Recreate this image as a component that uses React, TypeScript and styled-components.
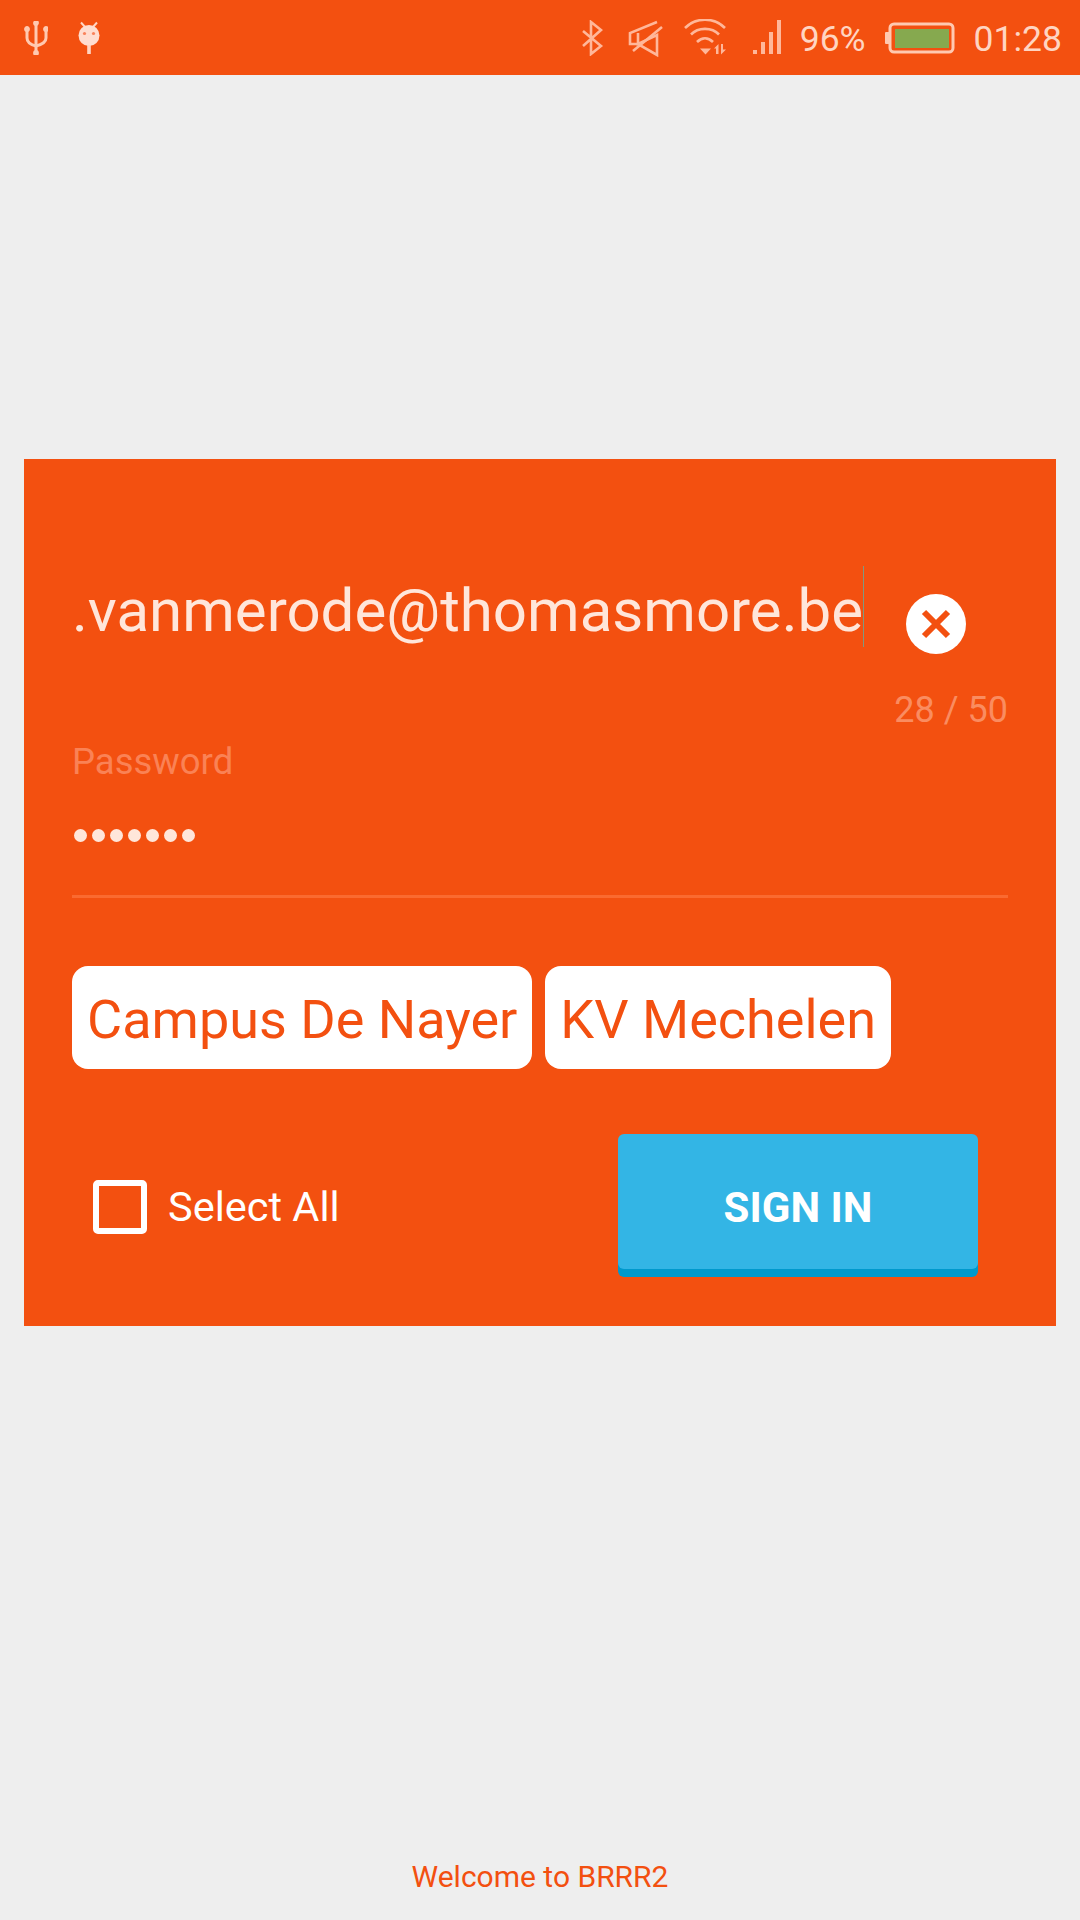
import React, {FC, ReactElement} from 'react';
import styled, {createGlobalStyle} from 'styled-components';

const ORANGE = '#F35010';

const GlobalStyle = createGlobalStyle`
html, body {
  margin: 0;
  padding: 0;
  background: #EEEEEE;
}
* {
  box-sizing: border-box;
}
`

const Page = styled.div`
width: 1080px;
height: 1920px;
display: flex;
flex-direction: column;
background: #EEEEEE;
font-family: Roboto, 'Liberation Sans', sans-serif;
overflow: hidden;`

const StatusBar = styled.div`
height: 75px;
flex: none;
background: ${ORANGE};
display: flex;
align-items: center;
justify-content: space-between;
padding: 0 18px 0 24px;`

const StatusGroup = styled.div`
display: flex;
align-items: center;`

const StatusItem = styled.div<{$left: number}>`
display: flex;
align-items: center;
margin-left: ${props => props.$left}px;`

const StatusText = styled.span<{$size: number}>`
font-size: ${props => props.$size}px;
color: #FFD5C2;
line-height: 75px;
padding-top: 4px;`

const Main = styled.div`
flex: 1;
padding: 384px 24px 0;`

const Card = styled.div`
height: 867px;
background: ${ORANGE};
padding: 107px 48px 0;`

const EmailRow = styled.div`
display: flex;
align-items: flex-start;
height: 92px;`

const EmailText = styled.div`
width: 792px;
height: 81px;
font-size: 60px;
line-height: 89px;
color: #FFE6DA;
white-space: nowrap;
text-align: right;
border-right: 1px solid #7F9A80;`

const ClearButton = styled.div`
width: 60px;
height: 60px;
margin: 28px 0 0 42px;
border-radius: 50%;
background: #FFFFFF;
display: flex;
align-items: center;
justify-content: center;`

const Counter = styled.div`
margin-top: 32px;
text-align: right;
font-size: 36px;
line-height: 40px;
color: #FA8C60;`

const PasswordLabel = styled.div`
margin-top: 12px;
font-size: 36.5px;
line-height: 40px;
color: #FA8255;`

const Dots = styled.div`
display: flex;
gap: 5px;
margin: 47px 0 0 2px;
height: 13px;`

const Dot = styled.span`
width: 13px;
height: 13px;
border-radius: 50%;
background: #FFE6DA;`

const Underline = styled.div`
height: 3px;
margin-top: 53px;
background: #FA6A30;`

const ChipRow = styled.div`
display: flex;
gap: 13px;
margin-top: 68px;`

const Chip = styled.div`
height: 103px;
padding: 4px 15px 0;
background: #FFFFFF;
border-radius: 16px;
display: flex;
align-items: center;
font-size: 54px;
color: ${ORANGE};
white-space: nowrap;`

const ActionRow = styled.div`
display: flex;
align-items: flex-start;
justify-content: space-between;
margin-top: 65px;
padding: 0 30px 0 21px;`

const SelectAll = styled.div`
display: flex;
align-items: center;
gap: 21px;
height: 135px;
padding-top: 10px;`

const CheckBox = styled.div`
width: 54px;
height: 54px;
border: 6px solid #FFFFFF;
border-radius: 5px;`

const SelectLabel = styled.span`
font-size: 41.5px;
color: #FFFFFF;`

const SignInButton = styled.div`
width: 360px;
height: 135px;
padding-top: 11px;
background: #33B5E5;
border-radius: 6px;
box-shadow: 0 8px 0 #0099CC;
display: flex;
align-items: center;
justify-content: center;
font-size: 42px;
font-weight: 700;
color: #FFFFFF;`

const Footer = styled.div`
height: 58px;
flex: none;
text-align: center;
font-size: 30px;
line-height: 30px;
color: ${ORANGE};`

const UsbIcon: FC = (): ReactElement => (
    <svg width="24" height="34" viewBox="0 0 24 34" fill="none" stroke="#FFC9B0" strokeWidth="3" strokeLinecap="round">
        <path d="M12 2V32" />
        <path d="M3 9V17C3 22 8 24 12 25C16 24 22 22 22 17V9" />
        <circle cx="12" cy="2" r="1.4" fill="#FFC9B0" />
        <circle cx="3" cy="8" r="1.4" fill="#FFC9B0" />
        <circle cx="22" cy="8" r="1.4" fill="#FFC9B0" />
        <circle cx="12" cy="32" r="1.4" fill="#FFC9B0" />
    </svg>
)

const BugIcon: FC = (): ReactElement => (
    <svg width="24" height="34" viewBox="0 0 24 34">
        <path d="M4 1.5L8 6M20 1.5L16 6" stroke="#FFD5C2" strokeWidth="2" />
        <circle cx="12" cy="14.5" r="10.5" fill="#FFDDD0" />
        <circle cx="7.5" cy="12.5" r="1.6" fill="#F9825A" />
        <circle cx="16.5" cy="12.5" r="1.6" fill="#F9825A" />
        <rect x="10.2" y="24" width="3.6" height="9" fill="#FFD5C2" />
    </svg>
)

const BluetoothIcon: FC = (): ReactElement => (
    <svg width="24" height="36" viewBox="0 0 24 36" fill="none" stroke="#FFB79A" strokeWidth="2.6">
        <path d="M3 11L21 26L11 34V2L21 10L3 26" />
    </svg>
)

const MuteIcon: FC = (): ReactElement => (
    <svg width="36" height="38" viewBox="0 0 36 38" fill="none" stroke="#FFB79A" strokeWidth="2.6">
        <path d="M30 3L3 14V25H11L30 36V16L11 25V14" />
        <path d="M6 32L35 8" />
    </svg>
)

const WifiIcon: FC = (): ReactElement => (
    <svg width="48" height="38" viewBox="0 0 48 38" fill="none" stroke="#FFB79A" strokeWidth="2.6">
        <path d="M3 9C14 -2 32 -2 43 9" />
        <path d="M9 15.5C16 8 30 8 37 15.5" />
        <path d="M15 23C20 18 26 18 31 23" />
        <path d="M18 29.5H29L23.5 35.5Z" fill="#FFB79A" stroke="none" />
        <path d="M36.5 25V35H34V29.5H32ZM39 25H41V30.5H44L39 35.5Z" fill="#FFB79A" stroke="none" />
    </svg>
)

const SignalIcon: FC = (): ReactElement => (
    <svg width="30" height="36" viewBox="0 0 30 36" fill="#FFB79A">
        <rect x="2" y="30" width="4" height="4" />
        <rect x="10" y="22" width="4" height="12" />
        <rect x="18" y="12" width="4" height="22" />
        <rect x="26" y="0" width="4" height="34" />
    </svg>
)

const BatteryIcon: FC = (): ReactElement => (
    <svg width="70" height="32" viewBox="0 0 70 32">
        <rect x="0" y="10" width="5" height="12" rx="1" fill="#FFC9B0" />
        <rect x="5" y="2" width="63" height="28" rx="4" fill="none" stroke="#FFC9B0" strokeWidth="3" />
        <rect x="10" y="7" width="54" height="19" fill="#86A94F" />
    </svg>
)

const ClearIcon: FC = (): ReactElement => (
    <svg width="30" height="30" viewBox="0 0 30 30" stroke={ORANGE} strokeWidth="6">
        <path d="M3 3L27 27M27 3L3 27" />
    </svg>
)

const App: FC = (): ReactElement => {
    return(
        <Page>
            <GlobalStyle />
            <StatusBar>
                <StatusGroup>
                    <UsbIcon />
                    <StatusItem $left={29}><BugIcon /></StatusItem>
                </StatusGroup>
                <StatusGroup>
                    <BluetoothIcon />
                    <StatusItem $left={23}><MuteIcon /></StatusItem>
                    <StatusItem $left={19}><WifiIcon /></StatusItem>
                    <StatusItem $left={21}><SignalIcon /></StatusItem>
                    <StatusItem $left={19}><StatusText $size={35.5}>96%</StatusText></StatusItem>
                    <StatusItem $left={19}><BatteryIcon /></StatusItem>
                    <StatusItem $left={19}><StatusText $size={35.5}>01:28</StatusText></StatusItem>
                </StatusGroup>
            </StatusBar>
            <Main>
                <Card>
                    <EmailRow>
                        <EmailText>.vanmerode@thomasmore.be</EmailText>
                        <ClearButton><ClearIcon /></ClearButton>
                    </EmailRow>
                    <Counter>28 / 50</Counter>
                    <PasswordLabel>Password</PasswordLabel>
                    <Dots>
                        {[0, 1, 2, 3, 4, 5, 6].map(i => <Dot key={i} />)}
                    </Dots>
                    <Underline />
                    <ChipRow>
                        <Chip>Campus De Nayer</Chip>
                        <Chip>KV Mechelen</Chip>
                    </ChipRow>
                    <ActionRow>
                        <SelectAll>
                            <CheckBox />
                            <SelectLabel>Select All</SelectLabel>
                        </SelectAll>
                        <SignInButton>SIGN IN</SignInButton>
                    </ActionRow>
                </Card>
            </Main>
            <Footer>Welcome to BRRR2</Footer>
        </Page>
    )
}
export default App;
